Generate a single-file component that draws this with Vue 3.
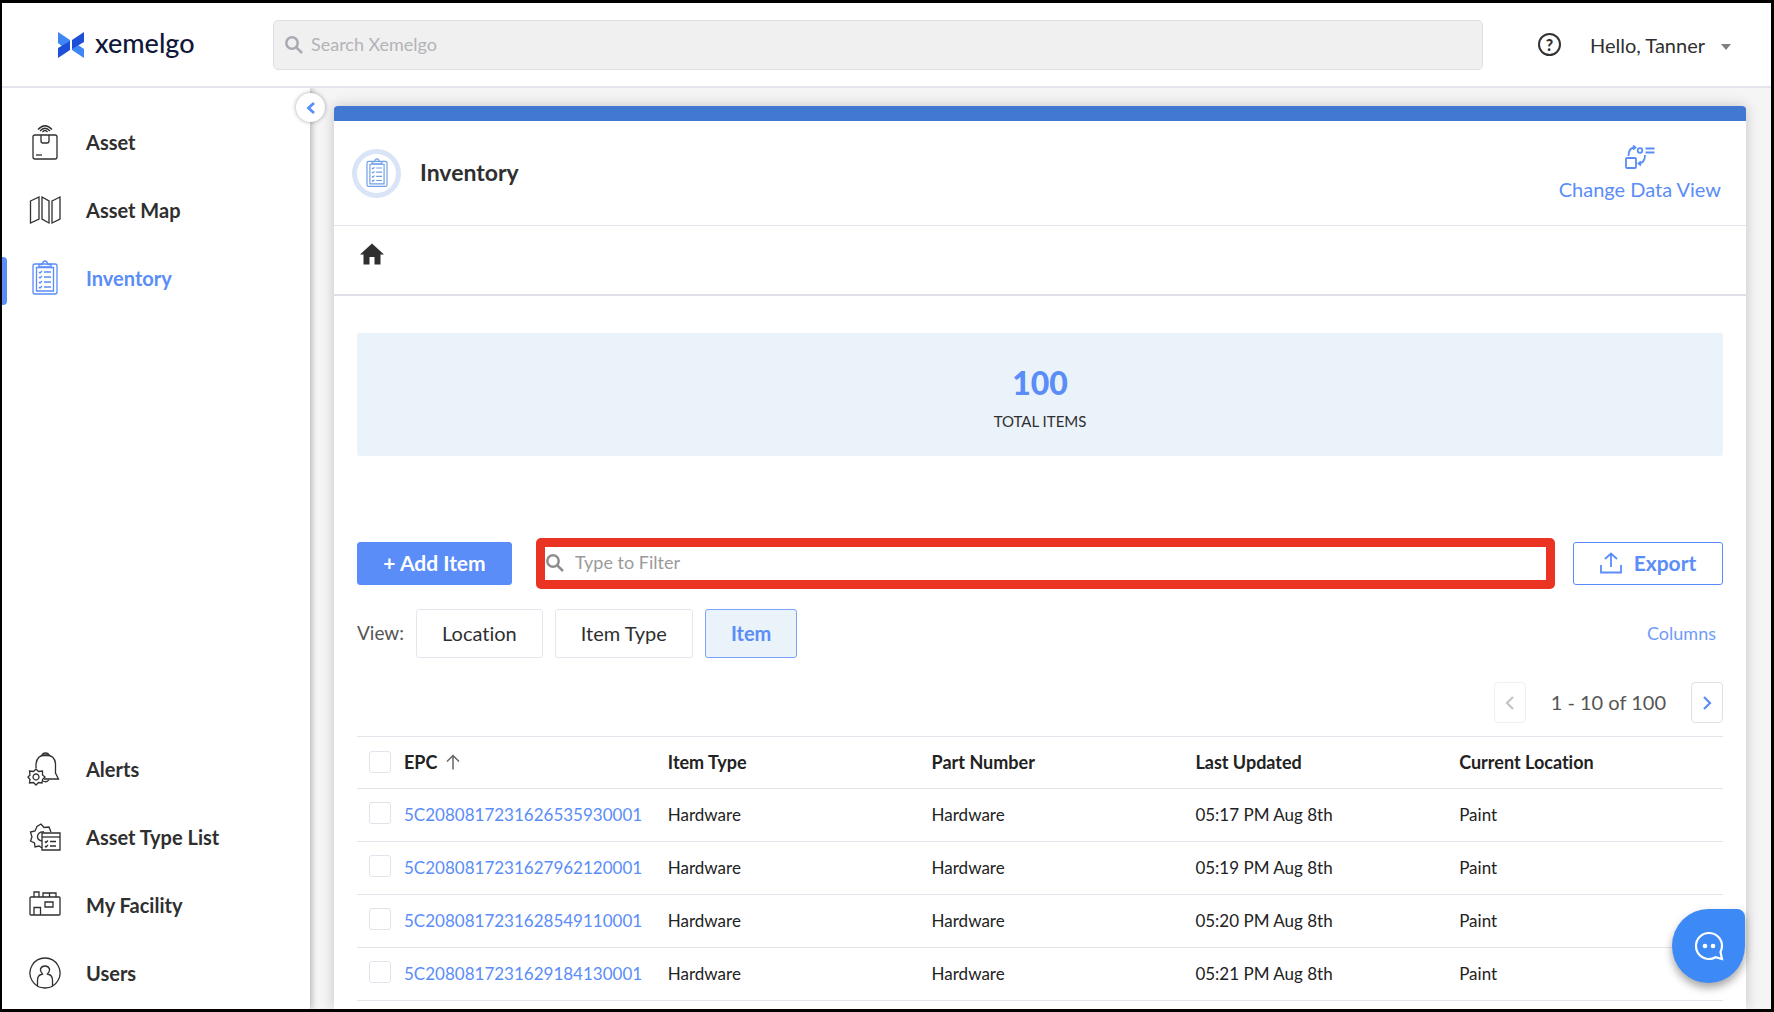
<template>
  <div class="app-shell">
    <header class="topbar">
      <a href="#" class="brand">
        <svg class="brand-mark" viewBox="0 0 26 26" aria-hidden="true">
          <path d="M0 0 L12 8 V11 L5 15 L0 11 Z" fill="#3f86f7" />
          <path d="M12 9 V18 L0 26 V16 Z" fill="#1d4fd8" />
          <path d="M17 14 L20 13 L26 17 V26 L14 18 V15 Z" fill="#3f86f7" />
          <path d="M26 0 V10 L14 17 V8 Z" fill="#1d4fd8" />
        </svg>
        <span>xemelgo</span>
      </a>
      <label class="global-search">
        <svg class="search-icon" viewBox="0 0 18 18" aria-hidden="true">
          <circle cx="7" cy="7" r="5.7" />
          <path d="M11.3 11.3 L17 17" />
        </svg>
        <input v-model="globalQuery" type="text" placeholder="Search Xemelgo" aria-label="Search Xemelgo" />
      </label>
      <div class="account">
        <button type="button" class="help-btn" aria-label="Help">?</button>
        <button type="button" class="user-btn">
          Hello, Tanner
          <svg class="caret" viewBox="0 0 10 6" aria-hidden="true"><path d="M0 0 H10 L5 6 Z" /></svg>
        </button>
      </div>
    </header>

    <div class="body">
      <aside class="sidebar">
        <nav v-for="group in navGroups" :key="group.id" class="nav-group">
          <a
            v-for="item in group.items"
            :key="item.label"
            href="#"
            class="nav-item"
            :class="{ active: item.label === activeNav }"
            @click.prevent="activeNav = item.label"
          >
            <svg class="nav-icon" viewBox="0 0 36 36" aria-hidden="true">
              <path v-for="(d, i) in icons[item.icon]" :key="i" :d="d" />
            </svg>
            <span>{{ item.label }}</span>
          </a>
        </nav>
        <button type="button" class="collapse-btn" aria-label="Collapse menu">
          <svg viewBox="0 0 10 14" aria-hidden="true"><path d="M8 2 L2.500 7 L8 12" /></svg>
        </button>
      </aside>

      <main class="content">
        <section class="card">
          <div class="card-header">
            <span class="badge">
              <svg viewBox="0 0 36 36" aria-hidden="true">
                <path v-for="(d, i) in icons.clipboard" :key="i" :d="d" />
              </svg>
            </span>
            <h1>Inventory</h1>
            <button type="button" class="data-view-btn">
              <svg viewBox="0 0 30 24" aria-hidden="true">
                <rect x="1" y="13" width="10" height="10" rx="1" />
                <path d="M3.500 11 C3.500 6 5.500 3 9 2.500 M8 0.500 L10.500 2.500 L8 4.500" />
                <circle cx="15" cy="5.500" r="2.300" />
                <path d="M20.500 3.500 H29.500 M20.500 7.500 H29.500" />
                <path d="M20 10 C20 14.500 18 18 14 18.500 M16 16.500 L13.500 18.500 L16 20.500" />
              </svg>
              Change Data View
            </button>
          </div>

          <div class="breadcrumb">
            <a href="#" aria-label="Home">
              <svg viewBox="0 0 24 22" aria-hidden="true">
                <path d="M12 0.500 L24 11.500 H20.500 V21.500 H14.500 V14 H9.500 V21.500 H3.500 V11.500 H0 Z" />
              </svg>
            </a>
          </div>

          <div class="card-body">
            <div class="summary">
              <strong>100</strong>
              <span>TOTAL ITEMS</span>
            </div>

            <div class="toolbar">
              <button type="button" class="btn-primary">+ Add Item</button>
              <label class="filter-box">
                <svg class="search-icon" viewBox="0 0 18 18" aria-hidden="true">
                  <circle cx="7" cy="7" r="5.7" />
                  <path d="M11.3 11.3 L17 17" />
                </svg>
                <input v-model="filterQuery" type="text" placeholder="Type to Filter" aria-label="Type to Filter" />
              </label>
              <button type="button" class="btn-outline">
                <svg viewBox="0 0 22 22" aria-hidden="true">
                  <path d="M1 13 V20.500 H21 V13 M11 15 V1.500 M5 7 L11 1.500 L17 7" />
                </svg>
                Export
              </button>
            </div>

            <div class="view-row">
              <span class="view-label">View:</span>
              <button
                v-for="view in views"
                :key="view"
                type="button"
                class="view-btn"
                :class="{ selected: view === activeView }"
                @click="activeView = view"
              >
                {{ view }}
              </button>
              <button type="button" class="columns-btn">Columns</button>
            </div>

            <div class="pagination">
              <button type="button" class="page-btn" disabled aria-label="Previous page">
                <svg viewBox="0 0 10 14" aria-hidden="true"><path d="M8 1 L2 7 L8 13" /></svg>
              </button>
              <span>1 - 10 of 100</span>
              <button type="button" class="page-btn" aria-label="Next page">
                <svg viewBox="0 0 10 14" aria-hidden="true"><path d="M2 1 L8 7 L2 13" /></svg>
              </button>
            </div>

            <table class="items-table">
              <thead>
                <tr>
                  <th class="check-col">
                    <input v-model="allSelected" type="checkbox" aria-label="Select all items" />
                  </th>
                  <th>
                    <span class="sorted">
                      EPC
                      <svg viewBox="0 0 14 16" aria-hidden="true">
                        <path d="M7 15.500 V1.500 M1 7.500 L7 1.500 L13 7.500" />
                      </svg>
                    </span>
                  </th>
                  <th>Item Type</th>
                  <th>Part Number</th>
                  <th>Last Updated</th>
                  <th>Current Location</th>
                </tr>
              </thead>
              <tbody>
                <tr v-for="row in filteredRows" :key="row.epc">
                  <td class="check-col">
                    <input v-model="selected" type="checkbox" :value="row.epc" :aria-label="row.epc" />
                  </td>
                  <td><a href="#">{{ row.epc }}</a></td>
                  <td>{{ row.type }}</td>
                  <td>{{ row.part }}</td>
                  <td>{{ row.updated }}</td>
                  <td>{{ row.location }}</td>
                </tr>
              </tbody>
            </table>
          </div>
        </section>
      </main>
    </div>

    <button type="button" class="chat-btn" aria-label="Open chat">
      <svg viewBox="0 0 30 30" aria-hidden="true">
        <path d="M26.500 21 C27.500 19 28 17.200 28 15 A13 13 0 1 0 15 28 C17.500 28 19.500 27.500 21.500 26.300 L28 28 Z" />
        <circle cx="11" cy="15" r="2.3" />
        <circle cx="19" cy="15" r="2.3" />
      </svg>
    </button>
  </div>
</template>

<script setup>
import { ref, computed } from 'vue'

const globalQuery = ref('')
const filterQuery = ref('')
const activeNav = ref('Inventory')
const activeView = ref('Item')
const selected = ref([])

const views = ['Location', 'Item Type', 'Item']

const navGroups = [
  {
    id: 'main',
    items: [
      { label: 'Asset', icon: 'box' },
      { label: 'Asset Map', icon: 'map' },
      { label: 'Inventory', icon: 'clipboard' }
    ]
  },
  {
    id: 'settings',
    items: [
      { label: 'Alerts', icon: 'bell' },
      { label: 'Asset Type List', icon: 'list' },
      { label: 'My Facility', icon: 'facility' },
      { label: 'Users', icon: 'user' }
    ]
  }
]

// Line icons on a 36 x 36 grid
const icons = {
  box: [
    'M8 11 H28 Q30 11 30 13 V33 Q30 35 28 35 H8 Q6 35 6 33 V13 Q6 11 8 11 Z',
    'M14 11 V17 Q14 19 16 19 H20 Q22 19 22 17 V11',
    'M9 31 H15',
    'M11 5.500 Q18 -2 25 5.500',
    'M13 7 Q18 1.500 23 7',
    'M15.500 8 Q18 5 20.500 8'
  ],
  map: [
    'M3.500 9 L12 5 V27 L3.500 31 Z',
    'M15 5 L22 9 V31 L15 27 Z',
    'M25 9 L33 5 V27 L25 31 Z'
  ],
  clipboard: [
    'M8 4 H28 Q30 4 30 6 V32 Q30 34 28 34 H8 Q6 34 6 32 V6 Q6 4 8 4 Z',
    'M9.500 7.500 H26.500 V31 H9.500 Z',
    'M12 7 V4.500 H15 Q16 1 18 1 Q20 1 21 4.500 H24 V7 Z',
    'M17 12 H24 M17 17 H24 M17 22 H24 M17 27 H24',
    'M12 12 L13 13 L15 11 M12 17 L13 18 L15 16 M12 22 L13 23 L15 21 M12 27 L13 28 L15 26'
  ],
  bell: [
    'M9 17 V13 Q10 4 18.500 4 Q28 4 28.500 13 V22 L31.500 28 H17',
    'M15 4.500 Q15.500 2 18.500 2 Q21.500 2 22 4.500 Z',
    'M16 30 Q20 32 22 28.500',
    'M9 18 L11.500 20.500 L15.500 20 L15.500 24 L18 26 L15.500 28.500 L15 32 L11.500 31.500 L9 34 L6.500 31.500 L2.500 32 L3 28.500 L1 26 L3 24 L2.500 20 L6.500 20.500 Z',
    'M9 23 A3 3 0 1 0 9.010 23 Z'
  ],
  list: [
    'M15 29 L12 27 L8 28 L7.500 24 L3.500 22 L5 18 L3.500 13 L8 12 L10 7.500 L14 5 L17 8.500 L22 8 L24 13',
    'M15 22 Q10 21 10.500 17 Q12 12 17 13',
    'M15 14 H33 V31 H15 Z',
    'M15 18 H33',
    'M18 22.500 L19 23.500 L21 21.500 M23 22.500 H29 M18 27 L19 28 L21 26 M23 27 H29'
  ],
  facility: [
    'M4 10 H32 Q33 10 33 11 V27 Q33 28 32 28 H4 Q3 28 3 27 V11 Q3 10 4 10 Z',
    'M7 10 V5 H12 V10 M16 10 V6 H22.500 V10 M22.500 6 H29 V10',
    'M18 15 H26 V20 H18 Z',
    'M7 28 V20.500 H13.500 V28'
  ],
  user: [
    'M18 3 A15 15 0 1 0 18.010 3 Z',
    'M10.500 31 V25 Q10.500 20 15.500 19 Q13 16 13.500 14 Q14.500 11 18 11 Q21.500 11 22.500 14 Q23 16 20.500 19 Q25.500 20 25.500 25 V31'
  ]
}

const rows = [
  { epc: '5C2080817231626535930001', type: 'Hardware', part: 'Hardware', updated: '05:17 PM Aug 8th', location: 'Paint' },
  { epc: '5C2080817231627962120001', type: 'Hardware', part: 'Hardware', updated: '05:19 PM Aug 8th', location: 'Paint' },
  { epc: '5C2080817231628549110001', type: 'Hardware', part: 'Hardware', updated: '05:20 PM Aug 8th', location: 'Paint' },
  { epc: '5C2080817231629184130001', type: 'Hardware', part: 'Hardware', updated: '05:21 PM Aug 8th', location: 'Paint' }
]

const filteredRows = computed(() => {
  const query = filterQuery.value.trim().toLowerCase()
  if (!query) return rows
  return rows.filter(row => Object.values(row).some(value => value.toLowerCase().includes(query)))
})

const allSelected = computed({
  get: () => rows.length > 0 && selected.value.length === rows.length,
  set: (value) => {
    selected.value = value ? rows.map(row => row.epc) : []
  }
})
</script>

<style>
body {
  margin: 0;
  background: #fff;
}
</style>

<style scoped>
.app-shell {
  box-sizing: border-box;
  display: flex;
  flex-direction: column;
  min-height: 100vh;
  border: 3px solid #000;
  border-left-width: 2px;
  background: #f5f5f5;
  color: #2f2f2f;
  font-family: Lato, "Open Sans", sans-serif;
  font-size: 18px;
  font-variant-ligatures: none;
}

.app-shell *,
.app-shell *::before {
  box-sizing: border-box;
}

a {
  color: inherit;
  text-decoration: none;
}

button {
  padding: 0;
  border: 0;
  background: none;
  color: inherit;
  font: inherit;
  font-variant-ligatures: none;
  cursor: pointer;
}

input {
  font: inherit;
}

svg {
  flex: none;
  fill: none;
  stroke: currentColor;
}

/* Top bar */
.topbar {
  display: flex;
  align-items: center;
  height: 85px;
  padding-right: 40px;
  border-bottom: 2px solid #e4e4ec;
  background: #fff;
}

.brand {
  display: flex;
  align-items: center;
  gap: 11px;
  width: 271px;
  padding-left: 56px;
  color: #10173a;
  font-size: 27px;
  font-weight: 500;
  line-height: 28px;
}

.brand span {
  padding-bottom: 4px;
}

.brand-mark {
  width: 26px;
  height: 26px;
  stroke: none;
}

.global-search {
  display: flex;
  flex: 1;
  align-items: center;
  gap: 8px;
  height: 50px;
  padding: 0 11px;
  border: 1px solid #dfdfe8;
  border-radius: 5px;
  background: #f0f0f0;
  color: #a9a9b2;
}

.search-icon {
  width: 18px;
  height: 18px;
  stroke-width: 2.5;
}

.global-search input,
.filter-box input {
  flex: 1;
  min-width: 0;
  padding: 0 0 2px;
  border: 0;
  outline: 0;
  background: transparent;
  color: #2f2f2f;
}

.global-search input::placeholder {
  color: #b3b3b8;
}

.account {
  display: flex;
  align-items: center;
  gap: 29px;
  padding-left: 55px;
}

.help-btn {
  width: 23px;
  height: 23px;
  border: 2px solid #333;
  border-radius: 50%;
  font-size: 16px;
  font-weight: 900;
  line-height: 19px;
}

.user-btn {
  display: flex;
  align-items: center;
  gap: 16px;
  font-size: 20px;
}

.caret {
  width: 10px;
  height: 6px;
  margin-top: 4px;
  fill: #808080;
  stroke: none;
}

/* Side navigation */
.body {
  display: flex;
  flex: 1;
}

.sidebar {
  position: relative;
  display: flex;
  flex-direction: column;
  justify-content: space-between;
  width: 308px;
  padding: 20px 0 2px;
  background: #fff;
  box-shadow: 2px 0 6px rgba(0, 0, 0, 0.25);
  clip-path: inset(0 -30px 0 0);
}

.nav-item {
  position: relative;
  display: flex;
  align-items: center;
  gap: 31px;
  height: 68px;
  padding-left: 25px;
  font-size: 20px;
  font-weight: 700;
}

.nav-item.active {
  color: #5a8df8;
}

.nav-item.active::before {
  content: "";
  position: absolute;
  top: 13px;
  left: 0;
  width: 5px;
  height: 48px;
  border-radius: 0 4px 4px 0;
  background: #5a8df8;
}

.nav-icon {
  width: 36px;
  height: 36px;
  margin-right: -8px;
  stroke-width: 1.3;
}

.collapse-btn {
  position: absolute;
  top: 5px;
  right: -15px;
  display: flex;
  align-items: center;
  justify-content: center;
  width: 29px;
  height: 29px;
  border-radius: 50%;
  background: #fff;
  box-shadow: 0 0 4px rgba(0, 0, 0, 0.35);
  color: #5a8df8;
}

.collapse-btn svg {
  width: 10px;
  height: 14px;
  stroke-width: 2.8;
}

/* Content card */
.content {
  display: flex;
  flex: 1;
  min-width: 0;
  padding: 18px 25px 0 24px;
}

.card {
  flex: 1;
  min-width: 0;
  border-top: 15px solid #4278d1;
  border-radius: 4px 4px 0 0;
  background: #fff;
  box-shadow: 0 0 14px rgba(0, 0, 0, 0.2);
  clip-path: inset(-18px -25px 0 -20px);
}

.card-header {
  display: flex;
  align-items: center;
  height: 105px;
  padding: 0 25px 0 18px;
  border-bottom: 1px solid #e4e4ec;
}

.badge {
  display: flex;
  align-items: center;
  justify-content: center;
  width: 49px;
  height: 49px;
  border: 5px solid #d9e5f7;
  border-radius: 50%;
  color: #6f9fe8;
}

.badge svg {
  width: 30px;
  height: 30px;
  stroke-width: 1.4;
}

h1 {
  flex: 1;
  margin: 0 0 0 19px;
  padding-bottom: 2px;
  font-size: 23px;
  font-weight: 700;
}

.data-view-btn {
  display: flex;
  flex-direction: column;
  align-items: center;
  gap: 8px;
  color: #5a8df8;
  font-size: 20px;
  line-height: 24px;
}

.data-view-btn svg {
  width: 30px;
  height: 24px;
  stroke-width: 1.8;
}

.breadcrumb {
  height: 70px;
  padding: 17px 26px;
  border-bottom: 2px solid #e0e0ea;
}

.breadcrumb svg {
  width: 24px;
  height: 22px;
  fill: #2f2f2f;
  stroke: none;
}

.card-body {
  padding: 37px 23px 0;
}

.summary {
  display: flex;
  flex-direction: column;
  align-items: center;
  justify-content: center;
  gap: 10px;
  height: 123px;
  padding-top: 6px;
  border-radius: 3px;
  background: #eaf2fa;
  font-size: 15px;
  line-height: 20px;
}

.summary strong {
  color: #5a8df8;
  font-size: 32px;
  font-weight: 900;
  line-height: 36px;
}

.toolbar {
  display: flex;
  align-items: center;
  margin-top: 82px;
}

.btn-primary,
.btn-outline {
  display: flex;
  align-items: center;
  justify-content: center;
  height: 43px;
  padding-bottom: 2px;
  border: 1px solid #5a8df8;
  border-radius: 3px;
  font-size: 21px;
  font-weight: 700;
}

.btn-primary {
  width: 155px;
  background: #5a8df8;
  color: #fff;
}

.btn-outline {
  gap: 12px;
  width: 150px;
  color: #5a8df8;
}

.btn-outline svg {
  width: 22px;
  height: 22px;
  stroke-width: 1.8;
}

.filter-box {
  display: flex;
  flex: 1;
  align-items: center;
  gap: 11px;
  height: 51px;
  margin: 0 18px 0 24px;
  padding: 0 0 2px 1px;
  border: 9px solid #ea3323;
  border-radius: 5px;
  color: #8e8e8e;
}

.filter-box input::placeholder {
  color: #9a9a9a;
}

.view-row {
  display: flex;
  align-items: center;
  gap: 12px;
  margin-top: 20px;
  font-size: 20px;
}

.view-label {
  padding-bottom: 2px;
  color: #555;
  font-size: 19px;
}

.view-btn {
  height: 49px;
  padding: 0 25px 2px;
  border: 1px solid #e6e6ee;
  border-radius: 3px;
}

.view-btn.selected {
  border-color: #7aa4f8;
  background: #eaf2fa;
  color: #5a8df8;
  font-weight: 700;
}

.columns-btn {
  margin: 0 7px 0 auto;
  padding-bottom: 2px;
  color: #6f9cf8;
  font-size: 18px;
}

.pagination {
  display: flex;
  align-items: center;
  justify-content: flex-end;
  gap: 25px;
  margin-top: 24px;
  color: #555;
  font-size: 20px;
}

.pagination span {
  padding-bottom: 2px;
}

.page-btn {
  display: flex;
  align-items: center;
  justify-content: center;
  width: 32px;
  height: 41px;
  border: 1px solid #dfdfe8;
  border-radius: 4px;
  color: #5a8df8;
}

.page-btn:disabled {
  border-color: #f0f0f3;
  color: #c4c4c4;
}

.page-btn svg {
  width: 10px;
  height: 14px;
  stroke-width: 2.2;
}

/* Items table */
.items-table {
  width: 100%;
  margin-top: 13px;
  border-collapse: collapse;
  border-top: 1px solid #e4e4ec;
  table-layout: fixed;
  color: #222;
  font-size: 17px;
}

.items-table tr {
  height: 53px;
  border-bottom: 1px solid #e4e4ec;
}

.items-table thead tr {
  height: 52px;
}

.items-table th,
.items-table td {
  padding: 0 0 2px;
  text-align: left;
}

.items-table th {
  font-size: 18px;
}

.items-table .check-col {
  width: 47px;
  padding-left: 12px;
}

.items-table td.check-col {
  padding-bottom: 4px;
}

.items-table input {
  display: block;
  width: 22px;
  height: 22px;
  margin: 0;
  border: 1px solid #e2e2ea;
  border-radius: 3px;
  background: #fff;
  appearance: none;
}

.items-table input:checked {
  border-color: #5a8df8;
  background: #5a8df8;
}

.items-table td a {
  color: #5a8df8;
}

.sorted {
  display: flex;
  align-items: center;
  gap: 9px;
}

.sorted svg {
  width: 14px;
  height: 16px;
  color: #666;
  stroke-width: 1.5;
}

/* Chat launcher */
.chat-btn {
  position: fixed;
  right: 29px;
  bottom: 29px;
  display: flex;
  align-items: center;
  justify-content: center;
  width: 73px;
  height: 74px;
  border-radius: 50% 8px 50% 50%;
  background: #3d8af7;
  box-shadow: 0 5px 8px rgba(0, 0, 0, 0.35);
  color: #fff;
}

.chat-btn svg {
  width: 30px;
  height: 30px;
  stroke-width: 2.2;
}

.chat-btn circle {
  fill: #fff;
  stroke: none;
}
</style>
